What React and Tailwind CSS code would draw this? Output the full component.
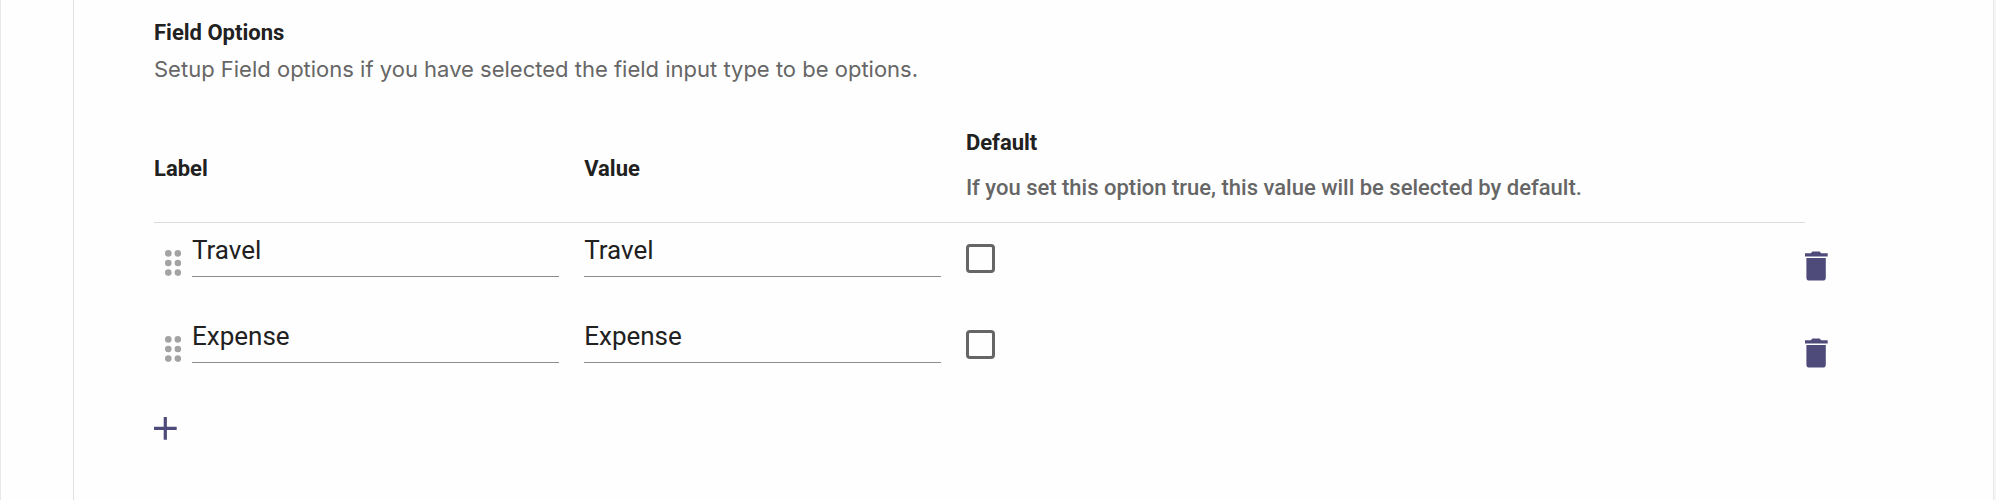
import { useState } from "react";

const initialOptions = [
  { id: 1, label: "Travel", value: "Travel", isDefault: false },
  { id: 2, label: "Expense", value: "Expense", isDefault: false },
];

function DragIcon() {
  return (
    <svg width="16" height="26" viewBox="0 0 16 26" fill="#a3a3a3" aria-hidden="true">
      <circle cx="3.3" cy="3.4" r="3.3" />
      <circle cx="12.9" cy="3.4" r="3.3" />
      <circle cx="3.3" cy="13" r="3.3" />
      <circle cx="12.9" cy="13" r="3.3" />
      <circle cx="3.3" cy="22.6" r="3.3" />
      <circle cx="12.9" cy="22.6" r="3.3" />
    </svg>
  );
}

function TrashIcon() {
  return (
    <svg width="23" height="30" viewBox="0 0 23 30" fill="#4e4b7a" aria-hidden="true">
      <path d="M0 2.2h5.8L7.4.5h7.2l1.6 1.7H22.7v3.2H0z" />
      <path d="M1.4 7.1h19.4v19.3a3.2 3.2 0 0 1-3.2 3.2H4.6a3.2 3.2 0 0 1-3.2-3.2z" />
    </svg>
  );
}

function PlusIcon() {
  return (
    <svg width="23" height="23" viewBox="0 0 23 23" fill="#4e4b7a" aria-hidden="true">
      <path d="M9.7 0h3.2v9.7h9.8v3.2h-9.8v9.8H9.7v-9.8H0V9.7h9.7z" />
    </svg>
  );
}

const inputClass =
  "block h-[54px] w-full min-w-0 border-b border-[#8c8c8c] bg-transparent pt-px text-[26px] text-[#212121] outline-none";

export default function App() {
  const [options, setOptions] = useState(initialOptions);

  const updateOption = (id, changes) => {
    setOptions(options.map((o) => (o.id === id ? { ...o, ...changes } : o)));
  };

  const removeOption = (id) => {
    setOptions(options.filter((o) => o.id !== id));
  };

  const addOption = () => {
    setOptions([
      ...options,
      { id: Date.now(), label: "", value: "", isDefault: false },
    ]);
  };

  return (
    <div className="min-h-screen bg-[#f5f5f5] pr-[2px] font-[Roboto,sans-serif] text-[#212121]">
      <div className="min-h-screen border-x border-[#e8e8e8] bg-[#fefefe] pl-[72px]">
        <section className="min-h-screen border-l border-[#e0e0e0] pt-[17px] pr-[165px] pb-10 pl-20">
          <h2 className="text-[22px] leading-8 font-bold">Field Options</h2>
          <p className="mt-[2px] font-[Inter,sans-serif] text-[22px] leading-9 text-[#666666]">
            Setup Field options if you have selected the field input type to be
            options.
          </p>

          <table className="mt-8 w-full table-fixed border-collapse text-left">
            <thead>
              <tr className="h-[103px] text-[22px] leading-[45px]">
                <th className="w-[25.7%] border-b border-[#dcdcdc] pb-1 font-bold">
                  Label
                </th>
                <th className="w-[22.8%] border-b border-[#dcdcdc] pb-1 font-bold">
                  Value
                </th>
                <th className="border-b border-[#dcdcdc] pb-[10px] font-bold">
                  Default
                  <p className="font-medium text-[#666666]">
                    If you set this option true, this value will be selected by
                    default.
                  </p>
                </th>
                <td className="w-[23px]"></td>
              </tr>
            </thead>
            <tbody>
              {options.map((option) => (
                <tr key={option.id} className="h-[87px] align-top">
                  <td className="pr-[25px]">
                    <div className="flex">
                      <button
                        type="button"
                        aria-label="Reorder option"
                        className="shrink-0 cursor-grab pt-[26px] pr-[11px] pl-[11px]"
                      >
                        <DragIcon />
                      </button>
                      <input
                        type="text"
                        aria-label="Label"
                        value={option.label}
                        onChange={(e) =>
                          updateOption(option.id, { label: e.target.value })
                        }
                        className={inputClass}
                      />
                    </div>
                  </td>
                  <td className="pr-[25px]">
                    <input
                      type="text"
                      aria-label="Value"
                      value={option.value}
                      onChange={(e) =>
                        updateOption(option.id, { value: e.target.value })
                      }
                      className={inputClass}
                    />
                  </td>
                  <td className="pt-[21px]">
                    <input
                      type="checkbox"
                      aria-label="Default"
                      checked={option.isDefault}
                      onChange={(e) =>
                        updateOption(option.id, { isDefault: e.target.checked })
                      }
                      className="block size-[29px] appearance-none rounded-[4px] border-3 border-[#666666] checked:bg-[#4e4b7a]"
                    />
                  </td>
                  <td className="pt-[29px]">
                    <button
                      type="button"
                      aria-label="Delete option"
                      onClick={() => removeOption(option.id)}
                      className="block"
                    >
                      <TrashIcon />
                    </button>
                  </td>
                </tr>
              ))}
            </tbody>
          </table>

          <button
            type="button"
            aria-label="Add option"
            onClick={addOption}
            className="mt-[21px] block"
          >
            <PlusIcon />
          </button>
        </section>
      </div>
    </div>
  );
}
